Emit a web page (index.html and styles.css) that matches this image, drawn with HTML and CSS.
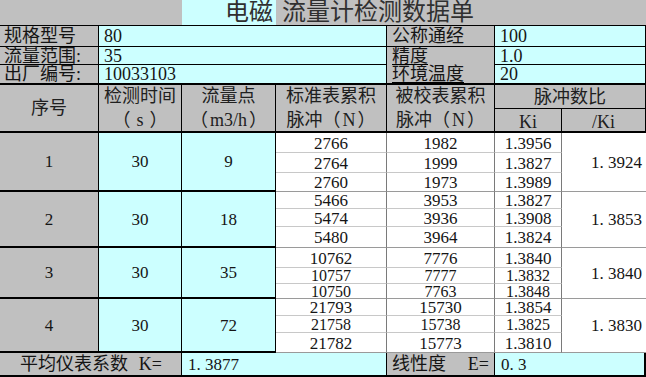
FILE: index.html
```html
<!DOCTYPE html>
<html lang="zh-CN">
<head>
<meta charset="utf-8">
<title>电磁流量计检测数据单</title>
<link rel="stylesheet" href="styles.css">
</head>
<body>
<div class="sheet">
  <div class="c gray title span2"></div>
  <div class="c cyan title title-m">电磁</div>
  <div class="c gray title title-r span4">流量计检测数据单</div>

  <div class="c gray lbl info">规格型号</div>
  <div class="c cyan val info span3">80</div>
  <div class="c gray lbl2 info">公称通经</div>
  <div class="c cyan val info span2">100</div>

  <div class="c gray lbl info">流量范围:</div>
  <div class="c cyan val info span3">35</div>
  <div class="c gray lbl2 info nob"><span class="ul">精度</span></div>
  <div class="c cyan val info span2">1.0</div>

  <div class="c gray lbl info last-info">出厂编号:</div>
  <div class="c cyan val info last-info span3">10033103</div>
  <div class="c gray lbl2 info last-info"><span class="ul ul-low">环境温度</span></div>
  <div class="c cyan val info last-info span2">20</div>

  <div class="c gray hd rs2">序号</div>
  <div class="c gray hd two rs2"><span>检测时间</span><span><span class="po">（</span>s<span class="pc">）</span></span></div>
  <div class="c gray hd two rs2"><span>流量点</span><span><span class="po narrow">（</span>m3/h<span class="pc narrow">）</span></span></div>
  <div class="c gray hd two rs2"><span>标准表累积</span><span>脉冲<span class="po narrow">（</span>N<span class="pc narrow">）</span></span></div>
  <div class="c gray hd two rs2"><span>被校表累积</span><span>脉冲<span class="po narrow">（</span>N<span class="pc narrow">）</span></span></div>
  <div class="c gray hd hd-top span2">脉冲数比</div>
  <div class="c gray hd hd-sub">Ki</div>
  <div class="c gray hd hd-sub">/Ki</div>

  <div class="c gray g rs3">1</div>
  <div class="c cyan g rs3">30</div>
  <div class="c cyan g rs3">9</div>
  <div class="c d">2766</div><div class="c d">1982</div><div class="c d">1.3956</div>
  <div class="c k rs3">1. 3924</div>
  <div class="c d">2764</div><div class="c d">1999</div><div class="c d">1.3827</div>
  <div class="c d end">2760</div><div class="c d end">1973</div><div class="c d end">1.3989</div>

  <div class="c gray g rs3">2</div>
  <div class="c cyan g rs3">30</div>
  <div class="c cyan g rs3">18</div>
  <div class="c d">5466</div><div class="c d">3953</div><div class="c d">1.3827</div>
  <div class="c k rs3">1. 3853</div>
  <div class="c d">5474</div><div class="c d">3936</div><div class="c d">1.3908</div>
  <div class="c d end">5480</div><div class="c d end">3964</div><div class="c d end">1.3824</div>

  <div class="c gray g rs3">3</div>
  <div class="c cyan g rs3">30</div>
  <div class="c cyan g rs3">35</div>
  <div class="c d">10762</div><div class="c d">7776</div><div class="c d">1.3840</div>
  <div class="c k rs3">1. 3840</div>
  <div class="c d tight">10757</div><div class="c d tight">7777</div><div class="c d tight">1.3832</div>
  <div class="c d end tight">10750</div><div class="c d end tight">7763</div><div class="c d end tight">1.3848</div>

  <div class="c gray g rs3">4</div>
  <div class="c cyan g rs3">30</div>
  <div class="c cyan g rs3">72</div>
  <div class="c d">21793</div><div class="c d">15730</div><div class="c d">1.3854</div>
  <div class="c k rs3">1. 3830</div>
  <div class="c d tight">21758</div><div class="c d tight">15738</div><div class="c d tight">1.3825</div>
  <div class="c d end">21782</div><div class="c d end">15773</div><div class="c d end">1.3810</div>

  <div class="c gray ft ft-l span2"><span>平均仪表系数</span><span>K=</span></div>
  <div class="c cyan ft ft-v span2">1. 3877</div>
  <div class="c gray ft ft-m"><span>线性度</span><span>E=</span></div>
  <div class="c cyan ft ft-v ft-r span2">0. 3</div>
</div>
</body>
</html>
```
FILE: styles.css
```css
html, body {
  margin: 0;
  padding: 0;
  background: #ffffff;
}
body {
  font-family: "Liberation Serif", "Noto Sans CJK SC", serif;
  color: #151515;
  text-spacing-trim: space-all;
}
.sheet {
  display: grid;
  width: 646px;
  grid-template-columns: 99px 83px 94px 111px 108px 67px 84px;
  grid-template-rows: 26px 21px 18px 20px 24px 24px 20px 20px 19px 17px 18px 21px 20px 16px 15px 17px 17px 20px 24px;
  overflow: hidden;
}
.c {
  box-sizing: border-box;
  display: flex;
  align-items: center;
  white-space: nowrap;
  line-height: 1;
  font-size: 18px;
  background: #ffffff;
}
.gray { background: #c0c0c0; }
.cyan { background: #ccffff; }
.span2 { grid-column: span 2; }
.span3 { grid-column: span 3; }
.span4 { grid-column: span 4; }
.rs2 { grid-row: span 2; }
.rs3 { grid-row: span 3; }

/* title */
.title {
  border-bottom: 1px solid #000;
  font-size: 24px;
  color: #303030;
  align-items: flex-end;
  padding-bottom: 1px;
}
.title-m {
  justify-content: flex-end;
  padding-right: 3px;
}
.title-r {
  padding-left: 6px;
}

/* info rows */
.info {
  border-bottom: 1px solid #000;
  border-right: 1px solid #000;
}
.lbl { padding-left: 4px; }
.lbl2 { padding-left: 5px; }
.val { padding-left: 5px; }
.nob { border-bottom: none; }
.last-info { border-bottom: 2px solid #000; }
.lbl2.nob, .lbl2.last-info {
  align-items: stretch;
}
.ul {
  display: flex;
  align-items: center;
  border-bottom: 1px solid #000;
}
.ul-low { padding-top: 1px; }

/* header */
.hd {
  justify-content: center;
  border-right: 1px solid #000;
  border-bottom: 2px solid #000;
  color: #202020;
}
.two {
  flex-direction: column;
  line-height: 22px;
  padding-bottom: 1px;
}
.po, .pc {
  display: inline-block;
  width: 1em;
  text-align: center;
  font-family: "Noto Sans CJK SC", sans-serif;
}
.po { margin-right: 6px; }
.pc { margin-left: 6px; }
.po.narrow { margin-right: 2px; }
.pc.narrow { margin-left: 2px; }
.hd-top { border-bottom: 1px solid #000; }
.hd-sub { padding-top: 3px; }

/* groups */
.g {
  justify-content: center;
  border-right: 1px solid #000;
  border-bottom: 2px solid #000;
  font-size: 17px;
}
.d {
  justify-content: center;
  font-size: 17px;
  line-height: 13px;
  border-right: 1px solid #7a7a7a;
  border-bottom: 1px solid #c8c8c8;
  padding-top: 1px;
}
.d.tight { font-size: 16px; line-height: 12px; }
.d.end { border-bottom: 1px solid #9a9a9a; }
.k {
  justify-content: flex-end;
  padding-right: 4px;
  font-size: 17px;
  border-bottom: 1px solid #9a9a9a;
}

/* footer */
.ft {
  border-bottom: 2px solid #000;
  border-right: 1px solid #000;
}
.ft-l {
  justify-content: space-between;
  padding: 0 19px 0 20px;
}
.ft-m {
  justify-content: space-between;
  padding: 0 5px 0 5px;
}
.ft-v {
  padding-left: 6px;
  font-size: 17px;
}
.ft-r {
  border-right: 2px solid #000;
}
```
